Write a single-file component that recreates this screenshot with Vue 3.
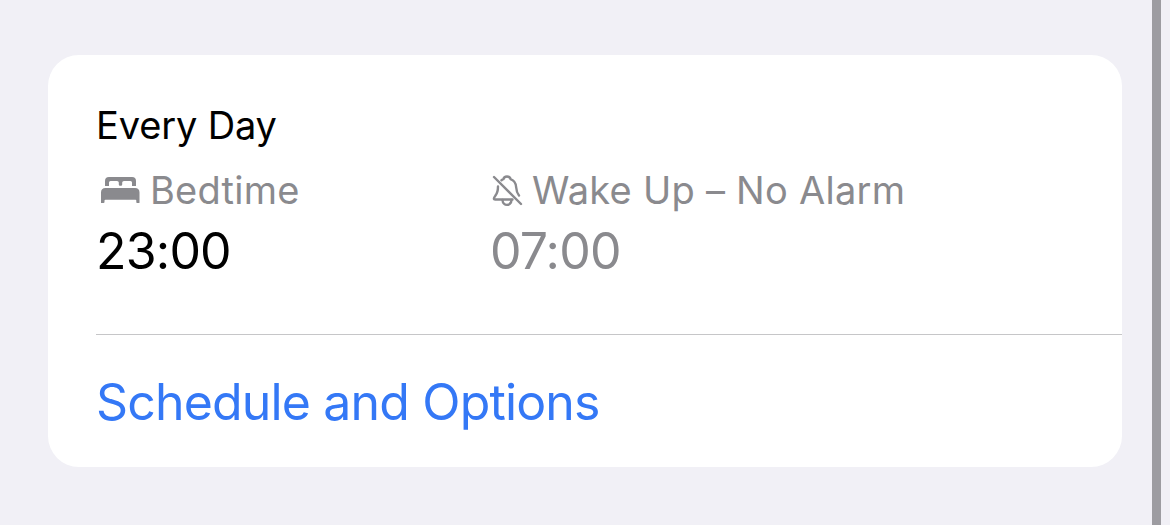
<template>
  <div class="screen">
    <main class="content">
      <section class="card">
        <div class="schedule">
          <h2>{{ schedule.days }}</h2>
          <div class="times">
            <div class="bedtime">
              <div class="label">
                <svg class="bed" width="39" height="26" viewBox="0 0 39 26">
                  <path
                    d="M4 9V4Q4 0 8 0H31Q35 0 35 4V9H31V5.500Q31 4 29.500 4H23Q21.200 4 21.200 5.500V7.500Q21.200 8.800 20 8.800H19Q17.800 8.800 17.800 7.500V5.500Q17.800 4 16 4H9.500Q8 4 8 5.500V9Z"
                  />
                  <path
                    d="M0 25.500V15.500Q0 11 4.500 11H34Q38.500 11 38.500 15.500V25.500Q38.500 26 38 26H36Q35.300 26 35.300 25V23.500Q35.300 22.700 34.500 22.700H4.500Q3.500 22.700 3.500 23.500V25Q3.500 26 2.500 26H.5Q0 26 0 25.500Z"
                  />
                </svg>
                <span class="bedtime-text">Bedtime</span>
              </div>
              <div class="time">{{ schedule.bedtime }}</div>
            </div>
            <div class="wake">
              <div class="label">
                <svg class="bell" width="31" height="32" viewBox="0 0 31 32">
                  <path d="M2 2L29 29" />
                  <path d="M9.500 5.300Q10.500 4.500 11.500 4.200C12 .6 18 .6 18.500 4.200C22.500 5.600 24 8.500 24.200 12.500C24.400 16 25 18 27 20.500" />
                  <path d="M6 11.500C6 16 5.600 18 3.400 20.600Q.5 24.500 3.200 24.500H20.500" />
                  <path d="M10.500 25C10.800 31.500 19.200 31.500 19.500 25" />
                </svg>
                <span class="wake-text">Wake Up – No Alarm</span>
              </div>
              <div class="time">{{ schedule.wake }}</div>
            </div>
          </div>
        </div>
        <button class="options">Schedule and Options</button>
      </section>
    </main>
    <div class="edge"></div>
  </div>
</template>

<script setup>
import { ref } from 'vue'

const schedule = ref({
  days: 'Every Day',
  bedtime: '23:00',
  wake: '07:00'
})
</script>

<style>
body {
  margin: 0;
  background-color: #f1f0f6;
}
</style>

<style scoped>
.screen {
  display: flex;
  height: 525px;
  overflow: hidden;
  background-color: #f1f0f6;
  font-family: Inter, 'Liberation Sans', sans-serif;
  white-space: nowrap;
}

.content {
  box-sizing: border-box;
  width: 1152px;
  padding: 55px 30px 58px 48px;
}

.edge {
  width: 9px;
  background-color: #9d9ca1;
}

.card {
  box-sizing: border-box;
  height: 412px;
  padding-left: 48px;
  border-radius: 31px;
  background-color: white;
}

.schedule {
  box-sizing: border-box;
  height: 280px;
  padding-top: 46px;
  border-bottom: 1px solid #c6c6c8;
}

h2 {
  margin: 0 0 17px;
  font-size: 38px;
  font-weight: 400;
  line-height: 48px;
  letter-spacing: -0.15px;
}

.times {
  display: flex;
}

.bedtime {
  width: 394px;
}

.label {
  display: flex;
  height: 48px;
  margin-bottom: 7px;
  color: #8a8a8e;
  font-size: 38px;
  line-height: 48px;
  letter-spacing: 0.25px;
}

.bed {
  margin: 11px 10px 0 5px;
  fill: currentColor;
}

.bell {
  margin: 9px 9px 0 2px;
  fill: none;
  stroke: currentColor;
  stroke-width: 2.4;
  stroke-linecap: round;
  stroke-linejoin: round;
}

.time {
  font-size: 50px;
  line-height: 60px;
  letter-spacing: -0.8px;
}

.wake .time {
  color: #8a8a8e;
}

.options {
  display: block;
  height: 132px;
  padding: 2px 0 0;
  border: none;
  background: none;
  color: #3478f6;
  font-family: inherit;
  font-size: 50px;
  line-height: 130px;
  letter-spacing: -0.84px;
}
</style>
